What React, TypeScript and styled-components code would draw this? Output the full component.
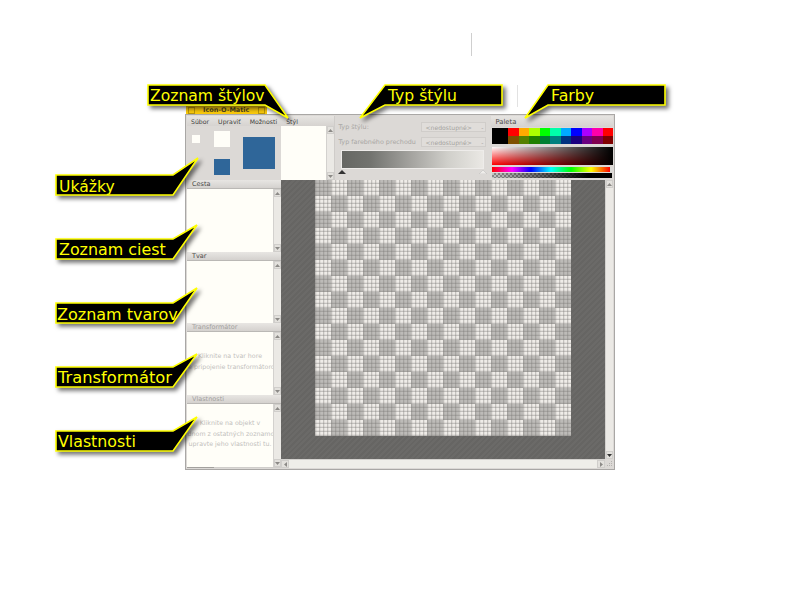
import React from 'react';
import styled, { createGlobalStyle } from 'styled-components';

const GlobalStyle = createGlobalStyle`
	html, body { margin: 0; padding: 0; background: #fff; }
	#root { width: 800px; height: 600px; overflow: hidden; }
`;

const Page = styled.div`
	position: relative;
	width: 800px;
	height: 600px;
	padding: 106px 0 0 185px;
	box-sizing: border-box;
	background: #fff;
	font-family: "DejaVu Sans", sans-serif;
`;

const Tab = styled.div`
	display: flex;
	align-items: center;
	gap: 8px;
	width: 81px;
	height: 8px;
	margin-left: 1px;
	padding: 0 2px;
	box-sizing: border-box;
	background: #f8c80c;
	font-size: 6.5px;
	font-weight: bold;
	color: #4d4420;
`;

const TabBox = styled.span`
	width: 5px;
	height: 5px;
	border: 1px solid #b8950a;
	flex: none;
	&:last-child { margin-left: auto; }
`;

const Frame = styled.div`
	width: 430px;
	height: 356px;
	box-sizing: border-box;
	padding: 1px;
	border: 1px solid #a9a7a5;
	background: #dcd9d6;
	display: flex;
	flex-direction: column;
`;

const TopRow = styled.div`
	display: flex;
	height: 64px;
	flex: none;
`;

const TopLeft = styled.div`
	width: 148px;
	display: flex;
	flex-direction: column;
`;

const MenuBar = styled.div`
	height: 10px;
	flex: none;
	display: flex;
	align-items: center;
	padding-left: 4px;
	gap: 9px;
	font-size: 6.2px;
	color: #3f3e3d;
	background: linear-gradient(#e6e4e1, #d6d3d0);
`;

const TopLeftBody = styled.div`
	flex: 1;
	display: flex;
	min-height: 0;
`;

const PreviewPanel = styled.div`
	width: 94px;
	box-sizing: border-box;
	padding: 2px 0 0 5px;
	display: grid;
	grid-template-columns: 22px 29px 33px;
	grid-template-rows: 22px 22px;
	row-gap: 6px;
	align-items: center;
	justify-items: start;
`;

const PreviewIcon = styled.div<{ $size: number; $color: string }>`
	width: ${({ $size }) => $size}px;
	height: ${({ $size }) => $size}px;
	background: ${({ $color }) => $color};
`;

const BigIcon = styled(PreviewIcon)`
	grid-column: 3;
	grid-row: 1 / span 2;
`;

const SmallBlue = styled(PreviewIcon)`
	grid-column: 2;
	grid-row: 2;
`;

const ListBox = styled.div`
	display: flex;
	min-height: 0;
	min-width: 0;
	background: #fffef8;
`;

const StyleList = styled(ListBox)`
	width: 53px;
`;

const ListContent = styled.div`
	flex: 1;
	min-width: 0;
	overflow: hidden;
	display: flex;
	flex-direction: column;
	align-items: center;
	justify-content: flex-start;
`;

const VTrack = styled.div`
	width: 8px;
	flex: none;
	display: flex;
	flex-direction: column;
	background: #ebe9e5;
	border-left: 1px solid #d3d1ce;
	box-sizing: border-box;
`;

const HTrack = styled.div`
	height: 9px;
	flex: none;
	display: flex;
	align-items: stretch;
	justify-content: space-between;
	background: #efeee9;
	border-top: 1px solid #d3d1ce;
	box-sizing: border-box;
`;

const Arrow = styled.div`
	width: 100%;
	height: 8px;
	flex: none;
	display: flex;
	align-items: center;
	justify-content: center;
	background: #e3e1dd;
	border: 1px solid #d0cecb;
	box-sizing: border-box;
	svg { display: block; }
`;

const Spacer = styled.div`
	flex: 1;
`;

const HArrow = styled(Arrow)`
	width: 8px;
	height: 100%;
`;

const Corner = styled.div`
	width: 8px;
	height: 9px;
	flex: none;
	background: #dcd9d6;
	svg { display: block; }
`;

const ArrowGlyph = ({ dir }: { dir: 'up' | 'down' | 'left' | 'right' }) => {
	const points = {
		up: '0,4 5,4 2.5,1',
		down: '0,1 5,1 2.5,4',
		left: '4,0 4,5 1,2.5',
		right: '1,0 1,5 4,2.5',
	}[dir];
	return (
		<svg width="5" height="5" viewBox="0 0 5 5">
			<polygon points={points} fill="#8c8a87" />
		</svg>
	);
};

const VScroll = ({ dark }: { dark?: boolean }) => (
	<VTrack>
		<Arrow><ArrowGlyph dir="up" /></Arrow>
		<Spacer />
		<Arrow>{dark ? (
			<svg width="5" height="5" viewBox="0 0 5 5"><polygon points="0,1 5,1 2.5,4" fill="#333" /></svg>
		) : <ArrowGlyph dir="down" />}</Arrow>
	</VTrack>
);

const StylePanel = styled.div`
	width: 156px;
	box-sizing: border-box;
	padding: 6px 3px 0 3px;
	display: flex;
	flex-direction: column;
	gap: 5px;
	border-left: 1px solid #cfccc9;
	font-size: 6.4px;
	color: #a9a7a4;
`;

const FieldRow = styled.div`
	display: flex;
	justify-content: space-between;
	align-items: center;
	height: 10px;
	padding-right: 1px;
`;

const Dropdown = styled.div`
	width: 65px;
	height: 10px;
	box-sizing: border-box;
	display: flex;
	align-items: center;
	justify-content: space-between;
	padding: 0 2px 0 3px;
	background: #e0ddda;
	border: 1px solid #d0cdca;
	color: #a5a3a0;
	font-size: 6.1px;
	white-space: nowrap;
`;

const GradientStrip = styled.div`
	width: 143px;
	height: 19px;
	margin: -2px 0 0 3px;
	box-sizing: border-box;
	border: 1px solid #eeecea;
	background: linear-gradient(90deg, #666763 0%, #72736f 20%, #a6a5a1 50%, #d0cfca 75%, #eae8e4 100%);
`;

const Markers = styled.div`
	display: flex;
	justify-content: space-between;
	margin: -4px 0 0 0;
	width: 149px;
`;

const PalettePanel = styled.div`
	width: 122px;
	margin-left: 1px;
	display: flex;
	flex-direction: column;
`;

const PaletteHead = styled.div`
	height: 11px;
	flex: none;
	display: flex;
	align-items: center;
	padding-left: 4px;
	font-size: 6.8px;
	color: #4a4947;
	background: linear-gradient(#e6e4e1, #d6d3d0);
`;

const SwatchRow = styled.div`
	display: flex;
	margin: 1px 0 0 1px;
	height: 16px;
`;

const CurrentColor = styled.div`
	width: 16px;
	background: #000;
`;

const SwatchGrid = styled.div`
	flex: 1;
	display: grid;
	grid-template-columns: repeat(10, 1fr);
	grid-template-rows: 1fr 1fr;
`;

const Swatch = styled.div<{ $color: string }>`
	background: ${({ $color }) => $color};
`;

const ColorField = styled.div`
	height: 18px;
	margin: 3px 0 0 1px;
	background:
		linear-gradient(90deg, rgba(0, 0, 0, 0) 0%, #000 100%),
		linear-gradient(#fff, #f00);
`;

const HueStrip = styled.div`
	height: 5px;
	margin: 2px 3px 0 1px;
	background: linear-gradient(90deg, #f00, #f0f 17%, #00f 33%, #0ff 50%, #0f0 67%, #ff0 84%, #f00);
`;

const AlphaStrip = styled.div`
	height: 5px;
	margin: 1px 1px 0 1px;
	background:
		linear-gradient(90deg, rgba(0, 0, 0, 0.1), #000 80%),
		repeating-conic-gradient(#999 0 25%, #ddd 0 50%) 0 0 / 4px 4px;
`;

const BottomRow = styled.div`
	flex: 1;
	display: flex;
	min-height: 0;
`;

const SideColumn = styled.div`
	width: 94px;
	flex: none;
	display: flex;
	flex-direction: column;
`;

const SectionHead = styled.div<{ $disabled?: boolean }>`
	height: 9px;
	flex: none;
	display: flex;
	align-items: center;
	padding-left: 5px;
	font-size: 6.5px;
	color: ${({ $disabled }) => ($disabled ? '#a3a19e' : '#4a4947')};
	background: linear-gradient(#e8e6e3, #d4d1ce);
	border-bottom: 1px solid #bab8b5;
	box-sizing: border-box;
`;

const SectionList = styled(ListBox)<{ $height: number }>`
	height: ${({ $height }) => $height}px;
	flex: none;
`;

const HintText = styled(ListContent)<{ $top: number }>`
	padding-top: ${({ $top }) => $top}px;
	font-size: 6.3px;
	line-height: 10.5px;
	color: #c2c0bc;
	white-space: nowrap;
`;

const StatusLine = styled.div`
	height: 1px;
	flex: none;
	background: linear-gradient(90deg, #a3a19e 0 27px, #d0cecb 27px);
`;

const CanvasColumn = styled.div`
	flex: 1;
	min-width: 0;
	display: flex;
	flex-direction: column;
`;

const CanvasRow = styled.div`
	flex: 1;
	min-height: 0;
	display: flex;
`;

const Canvas = styled.div`
	flex: 1;
	padding-left: 34px;
	background: repeating-linear-gradient(135deg, #6b6a68 0 2px, #666563 2px 4px);
`;

const IconGrid = styled.div`
	width: 256px;
	height: 256px;
	background:
		repeating-linear-gradient(90deg, rgba(120, 118, 115, 0.36) 0 1px, rgba(120, 118, 115, 0.1) 1px 2px, transparent 2px 4px),
		repeating-linear-gradient(0deg, rgba(120, 118, 115, 0.36) 0 1px, rgba(120, 118, 115, 0.1) 1px 2px, transparent 2px 4px),
		repeating-conic-gradient(#efece8 0 25%, #bdbbb8 0 50%) 0 0 / 32px 32px;
`;

const CanvasBar = styled.div`
	display: flex;
`;

const HBar = styled(HTrack)`
	flex: 1;
`;

const Callouts = styled.div`
	position: absolute;
	inset: 0;
	pointer-events: none;
`;

const Balloon = styled.svg`
	position: absolute;
	left: 0;
	top: 0;
	overflow: visible;
	filter: drop-shadow(3px 3px 2px rgba(0, 0, 0, 0.55));
`;

const Label = styled.div<{ $x: number; $y: number; $size: number }>`
	position: absolute;
	left: ${({ $x }) => $x}px;
	top: ${({ $y }) => $y}px;
	height: 20px;
	line-height: 20px;
	font-size: ${({ $size }) => $size}px;
	color: #ffff00;
	white-space: nowrap;
`;

const Scratch = styled.div<{ $x: number; $y: number; $h: number; $c: string }>`
	position: absolute;
	left: ${({ $x }) => $x}px;
	top: ${({ $y }) => $y}px;
	width: 1px;
	height: ${({ $h }) => $h}px;
	background: ${({ $c }) => $c};
`;

const swatchColors = [
	'#ff0000', '#ffaa00', '#aaff00', '#00ff00', '#00ffaa', '#00aaff', '#0000ff', '#aa00ff', '#ff00aa', '#ff0000',
	'#7f5000', '#558000', '#1f8000', '#008033', '#008080', '#003380', '#1a0080', '#6a0080', '#800050', '#800000',
];

const balloons = [
	{ text: 'Zoznam štýlov', x: 150, y: 86, size: 15.6, points: '148,85 265,85 288,118 265,105 148,105' },
	{ text: 'Typ štýlu', x: 388, y: 86, size: 15.6, points: '385,85 502,85 502,105 385,105 360,118' },
	{ text: 'Farby', x: 551, y: 86, size: 15.8, points: '548,85 665,85 665,105 548,105 525,118' },
	{ text: 'Ukážky', x: 59, y: 177, size: 15.6, points: '56,175 173,175 198,158 173,195 56,195' },
	{ text: 'Zoznam ciest', x: 59, y: 240, size: 15.9, points: '56,239 173,239 197,225 173,259 56,259' },
	{ text: 'Zoznam tvarov', x: 57, y: 305, size: 16, points: '56,303 173,303 197,288 173,323 56,323' },
	{ text: 'Transformátor', x: 58, y: 368, size: 16.3, points: '56,367 173,367 197,354 173,387 56,387' },
	{ text: 'Vlastnosti', x: 58, y: 432, size: 15.8, points: '56,431 173,431 197,417 173,451 56,451' },
];

const App = () => (
	<Page>
		<GlobalStyle />
		<Tab>
			<TabBox />
			Icon-O-Matic
			<TabBox />
		</Tab>
		<Frame>
			<TopRow>
				<TopLeft>
					<MenuBar>
						<span>Súbor</span>
						<span>Upraviť</span>
						<span>Možnosti</span>
						<span>Štýl</span>
					</MenuBar>
					<TopLeftBody>
						<PreviewPanel>
							<PreviewIcon $size={8} $color="#fffef8" />
							<PreviewIcon $size={16} $color="#fffef8" />
							<BigIcon $size={32} $color="#2f6699" />
							<SmallBlue $size={16} $color="#2f6699" />
						</PreviewPanel>
						<StyleList>
							<ListContent />
							<VScroll />
						</StyleList>
					</TopLeftBody>
				</TopLeft>
				<StylePanel>
					<FieldRow>
						Typ štýlu:
						<Dropdown><span>&lt;nedostupné&gt;</span><span>-</span></Dropdown>
					</FieldRow>
					<FieldRow>
						Typ farebného prechodu
						<Dropdown><span>&lt;nedostupné&gt;</span><span>-</span></Dropdown>
					</FieldRow>
					<GradientStrip />
					<Markers>
						<svg width="8" height="4" viewBox="0 0 8 4"><polygon points="0,4 8,4 4,0" fill="#333" /></svg>
						<svg width="8" height="4" viewBox="0 0 8 4"><polygon points="0,4 8,4 4,0" fill="#efedea" stroke="#bbb" strokeWidth="0.5" /></svg>
					</Markers>
				</StylePanel>
				<PalettePanel>
					<PaletteHead>Paleta</PaletteHead>
					<SwatchRow>
						<CurrentColor />
						<SwatchGrid>
							{swatchColors.map((color, i) => <Swatch key={i} $color={color} />)}
						</SwatchGrid>
					</SwatchRow>
					<ColorField />
					<HueStrip />
					<AlphaStrip />
				</PalettePanel>
			</TopRow>
			<BottomRow>
				<SideColumn>
					<SectionHead>Cesta</SectionHead>
					<SectionList $height={63}>
						<ListContent />
						<VScroll />
					</SectionList>
					<SectionHead>Tvar</SectionHead>
					<SectionList $height={62}>
						<ListContent />
						<VScroll />
					</SectionList>
					<SectionHead $disabled>Transformátor</SectionHead>
					<SectionList $height={63}>
						<HintText $top={19}>
							<span>Kliknite na tvar hore</span>
							<span>pre pripojenie transformátorov</span>
						</HintText>
						<VScroll />
					</SectionList>
					<SectionHead $disabled>Vlastnosti</SectionHead>
					<SectionList $height={63}>
						<HintText $top={14}>
							<span>Kliknite na objekt v</span>
							<span>jednom z ostatných zoznamov</span>
							<span>upravte jeho vlastnosti tu.</span>
						</HintText>
						<VScroll />
					</SectionList>
					<StatusLine />
				</SideColumn>
				<CanvasColumn>
					<CanvasRow>
						<Canvas><IconGrid /></Canvas>
						<VScroll dark />
					</CanvasRow>
					<CanvasBar>
						<HBar>
							<HArrow><ArrowGlyph dir="left" /></HArrow>
							<HArrow><ArrowGlyph dir="right" /></HArrow>
						</HBar>
						<Corner>
							<svg width="8" height="9" viewBox="0 0 8 9">
								<path d="M6 2h1v1H6zM4 4h1v1H4zM6 4h1v1H6zM2 6h1v1H2zM4 6h1v1H4zM6 6h1v1H6z" fill="#b5b3b0" />
							</svg>
						</Corner>
					</CanvasBar>
				</CanvasColumn>
			</BottomRow>
		</Frame>
		<Scratch $x={471} $y={33} $h={23} $c="#cfcfcf" />
		<Scratch $x={517} $y={85} $h={22} $c="#e2e2e2" />
		<Callouts>
			{balloons.map((b) => (
				<React.Fragment key={b.text}>
					<Balloon width="1" height="1">
						<polygon points={b.points} fill="#000" stroke="#ffff00" strokeWidth="1.6" strokeLinejoin="miter" />
					</Balloon>
					<Label $x={b.x} $y={b.y} $size={b.size}>{b.text}</Label>
				</React.Fragment>
			))}
		</Callouts>
	</Page>
);

export default App;
